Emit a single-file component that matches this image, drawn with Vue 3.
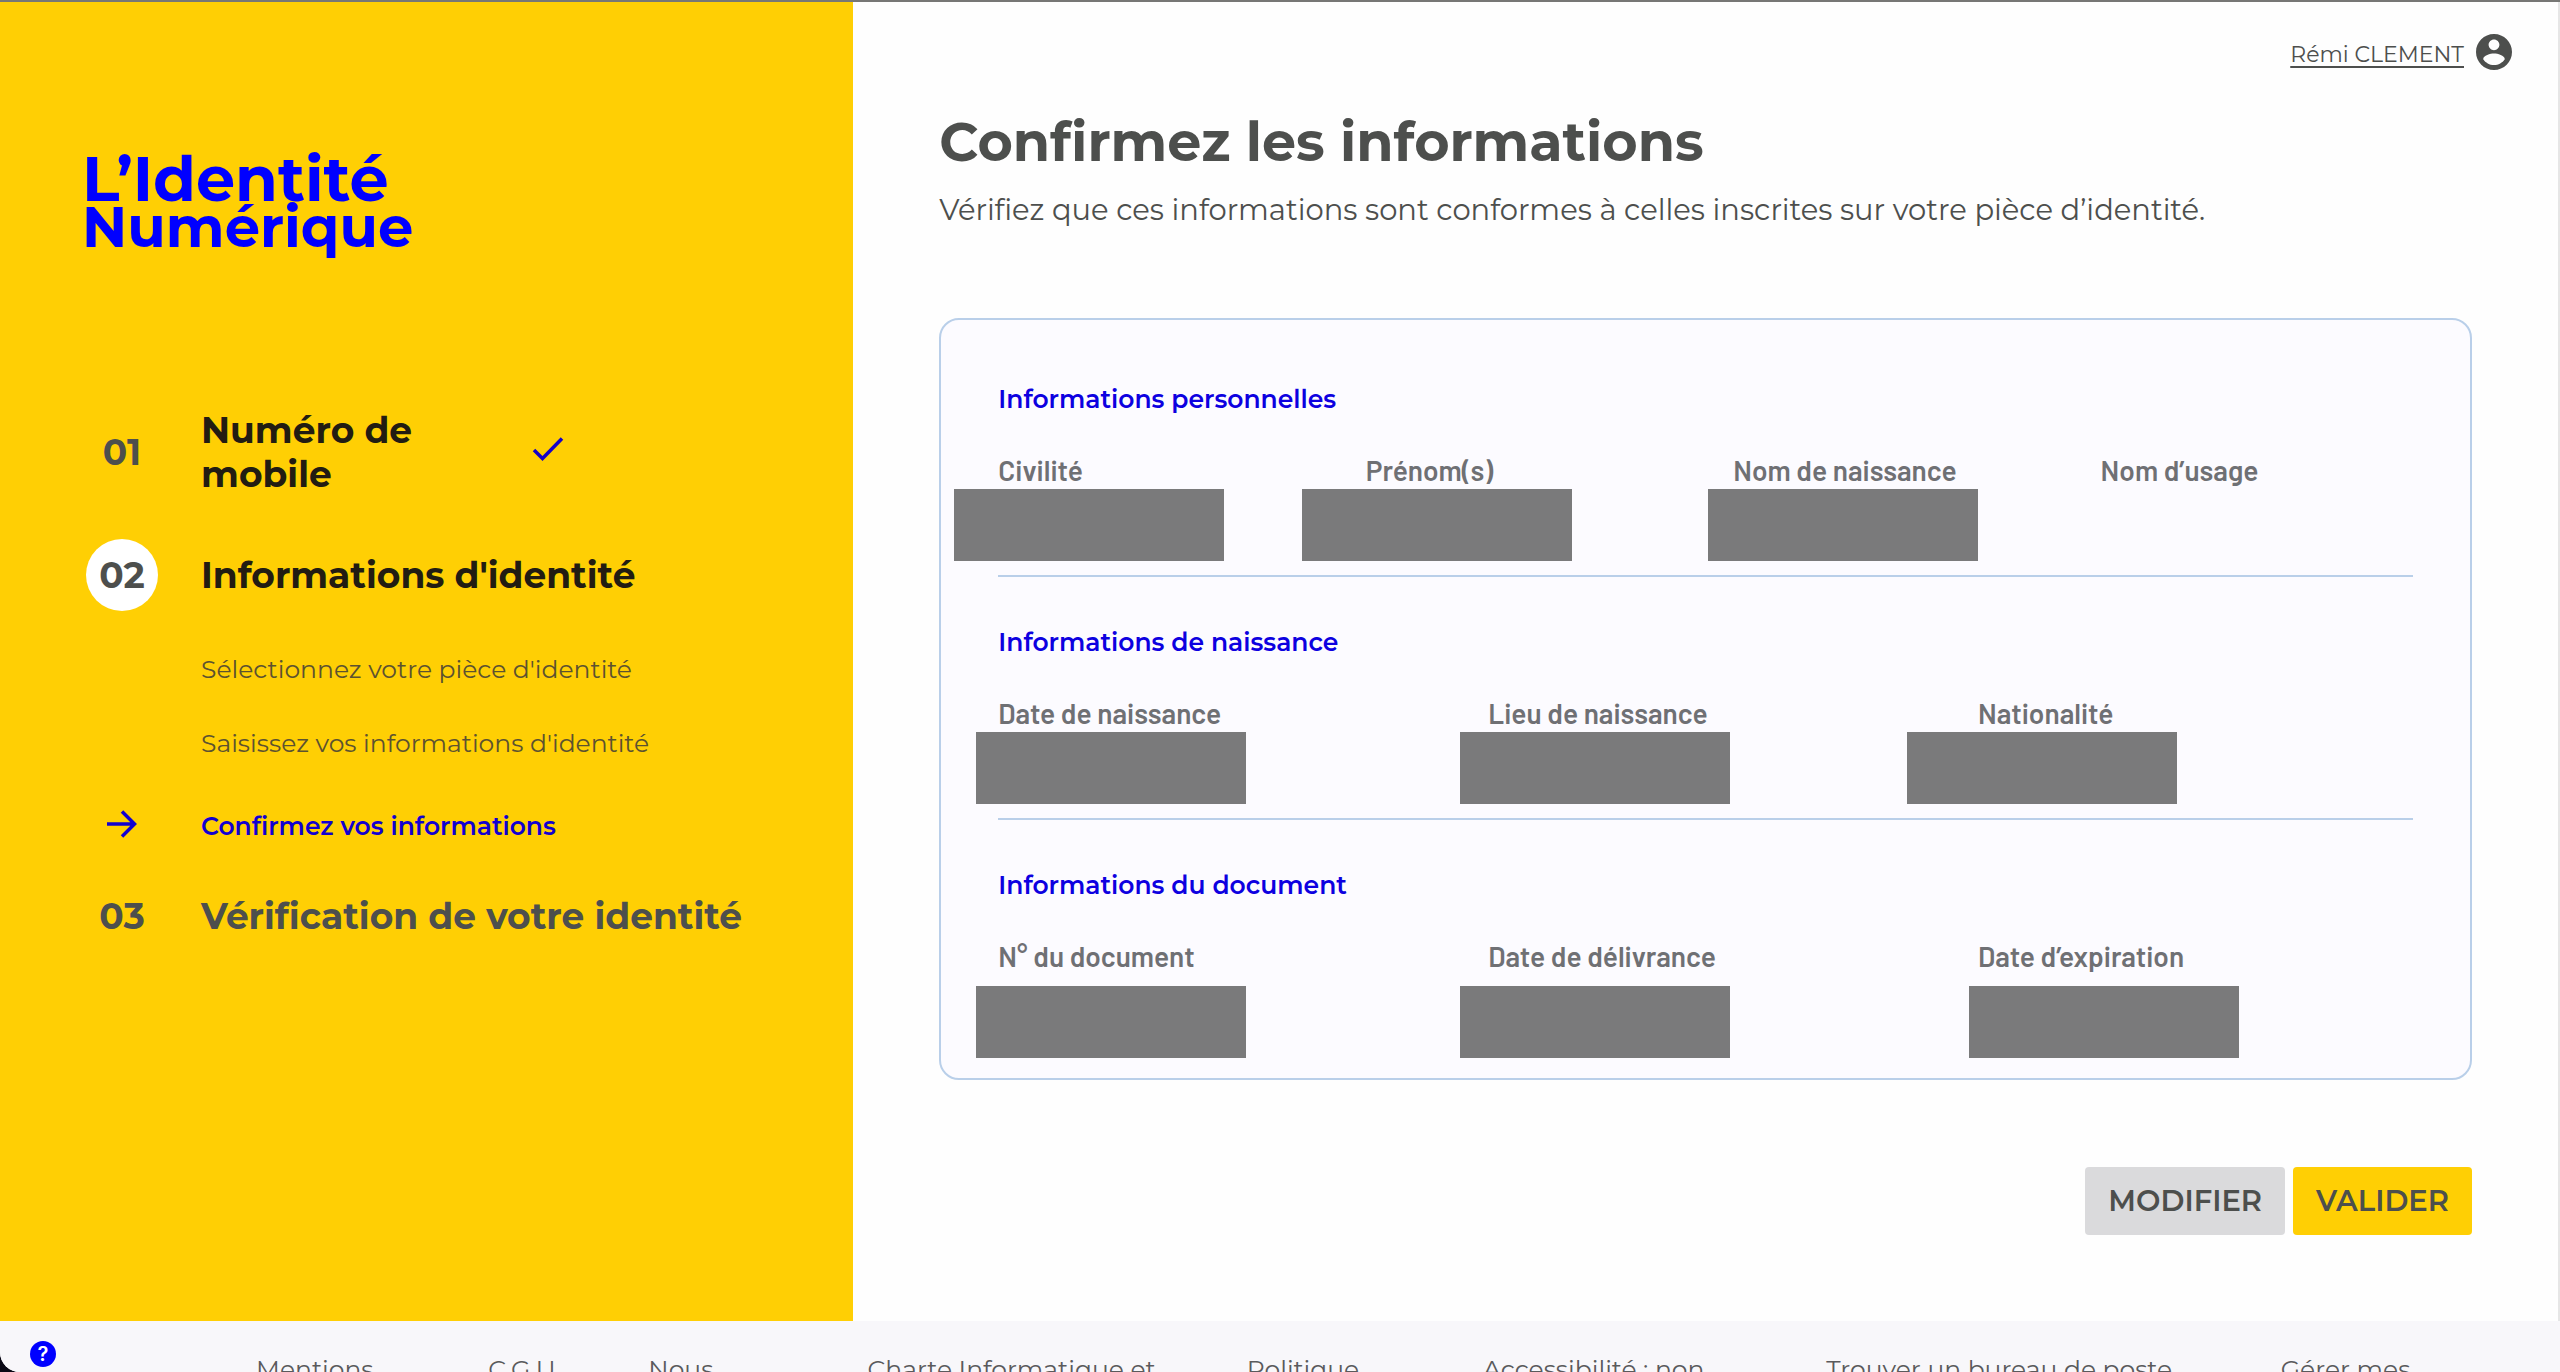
<script setup>
const substeps = [
  { label: "Sélectionnez votre pièce d'identité", current: false },
  { label: "Saisissez vos informations d'identité", current: false },
  { label: 'Confirmez vos informations', current: true },
]

// "mask" is the distance between the label's left edge and the redaction block.
const sections = [
  {
    title: 'Informations personnelles',
    columns: 4,
    fields: [
      { label: 'Civilité', mask: -44 },
      { label: 'Prénom(s)', mask: -64 },
      { label: 'Nom de naissance', mask: -25 },
      { label: 'Nom d’usage', mask: null },
    ],
  },
  {
    title: 'Informations de naissance',
    columns: 3,
    fields: [
      { label: 'Date de naissance', mask: -22 },
      { label: 'Lieu de naissance', mask: -28 },
      { label: 'Nationalité', mask: -71 },
    ],
  },
  {
    title: 'Informations du document',
    columns: 3,
    fields: [
      { label: 'N° du document', mask: -22 },
      { label: 'Date de délivrance', mask: -28 },
      { label: 'Date d’expiration', mask: -9 },
    ],
  },
]

const footerLinks = [
  'Mentions',
  'C.G.U',
  'Nous',
  'Charte Informatique et',
  'Politique',
  'Accessibilité : non',
  'Trouver un bureau de poste',
  'Gérer mes',
]
</script>

<template>
  <div class="page">
    <div class="body">
      <aside class="sidebar">
        <div class="logo">
          <span class="logo-top">L’Identité</span>
          <span class="logo-bottom">Numérique</span>
        </div>

        <ol class="steps">
          <li class="step done">
            <span class="number">01</span>
            <span class="step-label">Numéro de mobile</span>
            <svg class="check" viewBox="0 0 32 26" aria-hidden="true">
              <path d="M2 14 L10.500 22.500 L30 2.500" fill="none" stroke="currentColor" stroke-width="3.500" />
            </svg>
          </li>
          <li class="step current">
            <span class="number">02</span>
            <span class="step-label">Informations d'identité</span>
          </li>
          <li>
            <ul class="substeps">
              <li v-for="s in substeps" :key="s.label" class="substep" :class="{ active: s.current }">
                <span class="marker">
                  <svg v-if="s.current" viewBox="0 0 30 28" aria-hidden="true">
                    <path d="M0 14 H27 M15 1.500 L27.500 14 L15 26.500" fill="none" stroke="currentColor" stroke-width="3.500" />
                  </svg>
                </span>
                <span>{{ s.label }}</span>
              </li>
            </ul>
          </li>
          <li class="step">
            <span class="number">03</span>
            <span class="step-label">Vérification de votre identité</span>
          </li>
        </ol>
      </aside>

      <main class="main">
        <header class="account">
          <a href="#compte">Rémi CLEMENT</a>
          <svg viewBox="2 2 20 20" aria-hidden="true">
            <path
              fill="currentColor"
              d="M12 2C6.480 2 2 6.480 2 12s4.480 10 10 10 10-4.480 10-10S17.520 2 12 2zm0 3c1.660 0 3 1.340 3 3s-1.340 3-3 3-3-1.340-3-3 1.340-3 3-3zm0 14.200c-2.500 0-4.710-1.280-6-3.220.030-1.990 4-3.080 6-3.080 1.990 0 5.970 1.090 6 3.080-1.290 1.940-3.500 3.220-6 3.220z"
            />
          </svg>
        </header>

        <div class="content">
          <h1>Confirmez les informations</h1>
          <p class="intro">Vérifiez que ces informations sont conformes à celles inscrites sur votre pièce d’identité.</p>

          <div class="card">
            <section v-for="s in sections" :key="s.title" class="section">
              <h2>{{ s.title }}</h2>
              <dl class="fields" :class="'cols-' + s.columns">
                <div v-for="f in s.fields" :key="f.label" class="field">
                  <dt>{{ f.label }}</dt>
                  <dd v-if="f.mask !== null" class="mask" :style="{ left: f.mask + 'px' }"></dd>
                </div>
              </dl>
            </section>
          </div>

          <div class="actions">
            <button type="button" class="secondary">MODIFIER</button>
            <button type="button" class="primary">VALIDER</button>
          </div>
        </div>
      </main>
    </div>

    <footer class="footer">
      <button type="button" class="help" aria-label="Aide">?</button>
      <nav class="links">
        <a v-for="l in footerLinks" :key="l" href="#pied">{{ l }}</a>
      </nav>
    </footer>
  </div>
</template>

<style>
body {
  background: #0a0814;
}
</style>

<style scoped>
* {
  box-sizing: border-box;
}

.page {
  height: 100vh;
  overflow: hidden;
  border-top: 2px solid #777775;
  border-bottom-left-radius: 20px;
  background: #fefefe;
  color: #4d4f4d;
  font-family: Montserrat, Inter, sans-serif;
}

.body {
  display: flex;
  min-height: calc(100vh - 53px);
}

h1,
h2,
p,
ol,
ul,
dl,
dd {
  margin: 0;
  padding: 0;
}

ol,
ul {
  list-style: none;
}

/* Sidebar */
.sidebar {
  flex: 0 0 33.333%;
  padding: 153px 44px 0 86px;
  background: #ffcf04;
}

/* Pulled left so that the letters, not their side bearing, line up with the steps */
.logo {
  display: flex;
  flex-direction: column;
  margin-left: -4px;
  color: #0000ff;
  font-weight: 700;
  line-height: 48px;
}

.logo-top {
  font-size: 62px;
}

.logo-bottom {
  font-size: 56px;
}

.steps {
  margin-top: 157px;
}

.step {
  display: flex;
  align-items: center;
  gap: 43px;
  min-height: 72px;
  font-size: 36px;
  font-weight: 700;
  line-height: 44px;
}

.number {
  flex: 0 0 72px;
  height: 72px;
  border-radius: 50%;
  line-height: 72px;
  text-align: center;
}

.done .step-label {
  flex: 0 0 288px;
}

.done .step-label,
.current .step-label {
  color: #221c12;
}

.current {
  margin-top: 43px;
}

.current .number {
  background: #ffffff;
}

.check {
  width: 32px;
  height: 26px;
  margin-bottom: 6px;
  color: #1500c8;
}

.substeps {
  display: flex;
  flex-direction: column;
  gap: 42px;
  padding: 42px 0 38px;
}

.substep {
  display: flex;
  align-items: center;
  gap: 43px;
  color: #5c5230;
  font-size: 25px;
  line-height: 32px;
}

.substep.active {
  margin-top: 9px;
  color: #1200d0;
  font-weight: 600;
}

.marker {
  display: flex;
  justify-content: center;
  flex: 0 0 72px;
}

.marker svg {
  width: 30px;
  height: 28px;
  margin-bottom: 4px;
}

/* Main column */
.main {
  flex: 1;
  min-width: 0;
  border-right: 2px solid #e6e6e6;
}

.account {
  display: flex;
  align-items: flex-end;
  justify-content: flex-end;
  gap: 12px;
  padding: 32px 46px 0;
}

.account a {
  color: inherit;
  font-size: 22px;
  line-height: 30px;
  text-underline-offset: 4px;
}

.account svg {
  width: 36px;
  height: 36px;
}

.content {
  padding: 38px 86px 84px;
}

h1 {
  font-size: 54px;
  font-weight: 700;
  line-height: 68px;
}

.intro {
  margin-top: 14px;
  font-size: 29px;
  line-height: 40px;
}

.card {
  margin-top: 88px;
  padding: 63px 57px 17px;
  border: 2px solid #b9cfe9;
  border-radius: 20px;
  background: #fcfbff;
}

.section + .section {
  margin-top: 49px;
}

h2 {
  color: #0d00e0;
  font-size: 25px;
  font-weight: 600;
  line-height: 32px;
}

.fields {
  display: grid;
  gap: 55px;
  height: 123px;
  margin-top: 39px;
  border-bottom: 2px solid #b9cfe9;
}

.section:last-child .fields {
  height: 121px;
  border-bottom: 0;
}

.cols-4 {
  grid-template-columns: repeat(4, 1fr);
}

.cols-3 {
  grid-template-columns: repeat(3, 1fr);
}

.field {
  position: relative;
}

dt {
  color: #6f7074;
  font-family: Barlow, Roboto, sans-serif;
  font-size: 28px;
  font-weight: 600;
  line-height: 32px;
  white-space: nowrap;
}

.mask {
  position: absolute;
  top: 35px;
  width: 270px;
  height: 72px;
  background: #7a7a7b;
}

.section:last-child .mask {
  top: 46px;
}

.actions {
  display: flex;
  justify-content: flex-end;
  gap: 8px;
  margin-top: 87px;
}

.actions button {
  height: 68px;
  padding: 0 23px;
  border: 0;
  border-radius: 4px;
  color: #4d4f4d;
  font: 600 29px/32px Montserrat, Inter, sans-serif;
}

.actions .secondary {
  background: #dadadc;
}

.actions .primary {
  background: #ffcf04;
}

/* Footer */
.footer {
  display: flex;
  align-items: flex-start;
  padding: 20px 0 40px 30px;
  background: #f8f7fa;
}

.help {
  flex: 0 0 26px;
  height: 26px;
  padding: 0;
  border: 0;
  border-radius: 50%;
  background: #0000ff;
  color: #ffffff;
  font: 600 20px/26px Inter, sans-serif;
}

.links {
  display: grid;
  flex: 1;
  grid-template-columns: 232fr 160fr 219fr 379fr 236fr 343fr 454fr 279fr;
  margin: 12px 0 0 200px;
}

.links a {
  color: #5a5a5c;
  font-size: 25px;
  line-height: 32px;
  text-decoration: none;
  white-space: nowrap;
}
</style>
